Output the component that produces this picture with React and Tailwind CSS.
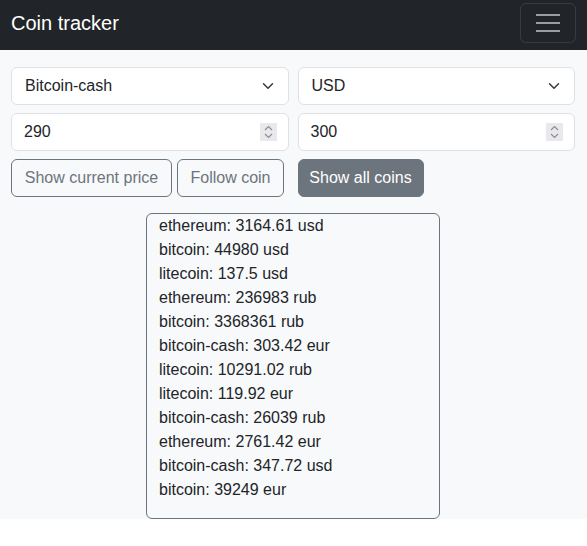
const coins = [
  "ethereum: 3164.61 usd",
  "bitcoin: 44980 usd",
  "litecoin: 137.5 usd",
  "ethereum: 236983 rub",
  "bitcoin: 3368361 rub",
  "bitcoin-cash: 303.42 eur",
  "litecoin: 10291.02 rub",
  "litecoin: 119.92 eur",
  "bitcoin-cash: 26039 rub",
  "ethereum: 2761.42 eur",
  "bitcoin-cash: 347.72 usd",
  "bitcoin: 39249 eur",
];

const Chevron = () => (
  <svg width="16" height="12" viewBox="0 0 16 16" fill="none">
    <path d="m2 5 6 6 6-6" stroke="#343a40" strokeWidth="2" strokeLinecap="round" strokeLinejoin="round" />
  </svg>
);

const Spinner = () => (
  <span className="w-[17px] h-[18px] bg-[#e9e9ed] flex items-center justify-center">
    <svg width="9" height="14" viewBox="0 0 9 14" fill="none">
      <path d="M1 5 4.5 1.5 8 5M1 9l3.5 3.5L8 9" stroke="#8d8d93" strokeWidth="1.2" />
    </svg>
  </span>
);

const Select = ({ value }) => (
  <div className="h-[38px] bg-white border border-[#dee2e6] rounded-md flex items-center justify-between pl-[13px] pr-3 text-[#212529]">
    <span>{value}</span>
    <Chevron />
  </div>
);

const NumberInput = ({ value }) => (
  <div className="h-[38px] bg-white border border-[#dee2e6] rounded-md flex items-center justify-between pl-3 pr-[11px] text-[#212529]">
    <span>{value}</span>
    <Spinner />
  </div>
);

export default function App() {
  return (
    <div className="font-['Liberation_Sans',Arial,sans-serif] text-base leading-6 bg-white min-h-[546px]">
      <header className="h-[50px] bg-[#212529] flex items-center justify-between pl-[11px] pr-[11px]">
        <h1 className="text-white text-[20px] leading-[30px] mb-1">Coin tracker</h1>
        <button className="w-[56px] h-[40px] -mt-[5px] border border-white/10 rounded-md flex flex-col items-center justify-center gap-[6px]">
          <span className="block w-[24px] h-[2px] bg-white/55" />
          <span className="block w-[24px] h-[2px] bg-white/55" />
          <span className="block w-[24px] h-[2px] bg-white/55" />
        </button>
      </header>

      <main className="bg-[#f8f9fa] pt-[17px] pl-[11px] pr-[12px]">
        <div className="grid grid-cols-2 gap-x-[9px] gap-y-[8px]">
          <Select value="Bitcoin-cash" />
          <Select value="USD" />
          <NumberInput value="290" />
          <NumberInput value="300" />
          <div className="flex gap-[5px]">
            <button className="h-[38px] w-[161px] border border-[#6c757d] text-[#6c757d] rounded-md">
              Show current price
            </button>
            <button className="h-[38px] w-[107px] border border-[#6c757d] text-[#6c757d] rounded-md">
              Follow coin
            </button>
          </div>
          <div className="flex">
            <button className="h-[38px] w-[126px] border border-[#6c757d] bg-[#6c757d] text-white rounded-md">
              Show all coins
            </button>
          </div>
        </div>

        <div className="flex justify-center pt-4">
          <ul className="w-[294px] border border-[#6c757d] rounded-md pl-3 pb-4 text-[#212529]">
            {coins.map((c, i) => (
              <li key={i}>{c}</li>
            ))}
          </ul>
        </div>
      </main>
    </div>
  );
}
